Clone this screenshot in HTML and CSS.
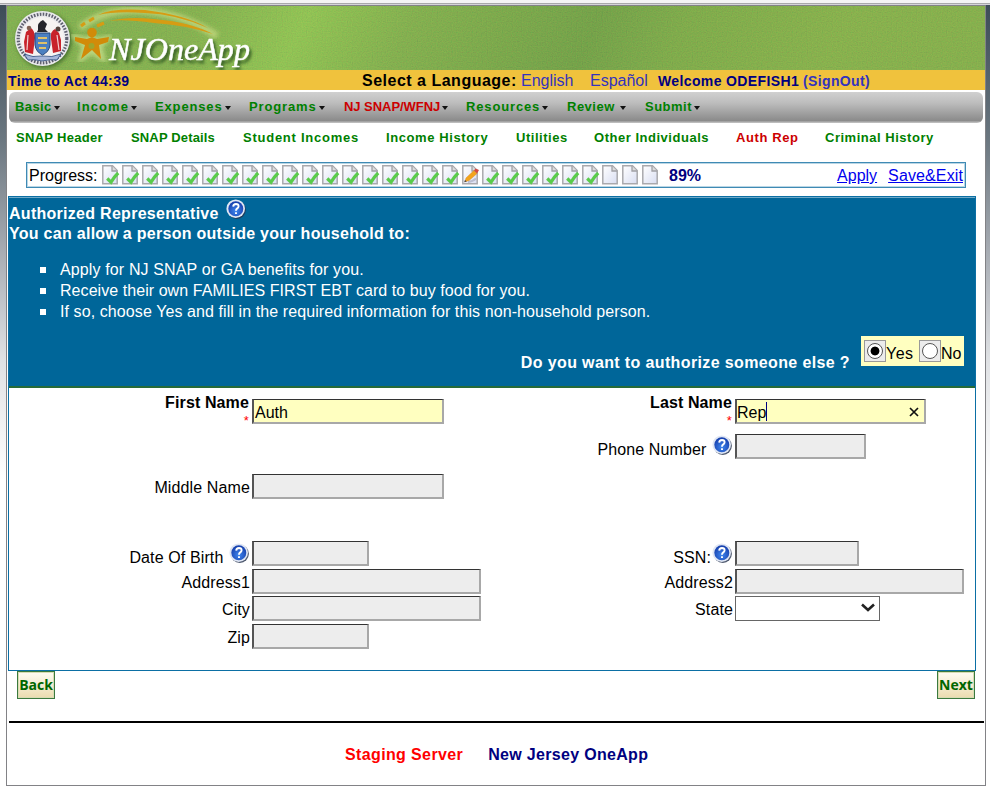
FILE: index.html
```html
<!DOCTYPE html>
<html lang="en">
<head>
<meta charset="utf-8">
<title>NJOneApp - Authorized Representative</title>
<link rel="stylesheet" href="styles.css">
</head>
<body>
<svg class="defs" width="0" height="0" aria-hidden="true">
  <defs>
    <linearGradient id="paper" x1="0" y1="0" x2="1" y2="1"><stop offset="0" stop-color="#fff"/><stop offset="1" stop-color="#d9def2"/></linearGradient>
    <radialGradient id="ball" cx=".5" cy=".65" r=".6"><stop offset="0" stop-color="#3f86ee"/><stop offset="1" stop-color="#1741ae"/></radialGradient>
    <symbol id="page" viewBox="0 0 20 20">
      <path d="M1.8 .8H11.5L16.2 5.5V18.7H1.8Z" fill="url(#paper)" stroke="#a9a9ad" stroke-width="1.5"/>
      <path d="M11 1V6H16" fill="#ddd" stroke="#a0a0a5" stroke-width="1.3"/>
    </symbol>
    <symbol id="done" viewBox="0 0 20 20">
      <use href="#page"/>
      <path d="M6.2 13.5L10 17.2C12 13.5 14 11 17.2 8" fill="none" stroke="#5bcb4b" stroke-width="3.2"/>
    </symbol>
    <symbol id="edit" viewBox="0 0 20 20">
      <use href="#page"/>
      <path d="M7 17Q12 16.5 15 13.5" fill="none" stroke="#b9bdd0" stroke-width="2"/>
      <path d="M5 13L13 5.5L16 8.5L8 15.5L4 16.7Z" fill="#f3a41c" stroke="#d98a24" stroke-width=".5"/>
      <path d="M13 5.5L14.5 3.5L18 5L16 8.5Z" fill="#d34a43"/>
      <path d="M3.2 17.3L4 15L5.8 16.5Z" fill="#444"/>
    </symbol>
    <symbol id="help" viewBox="0 0 20 20">
      <circle cx="10.8" cy="10.8" r="9.1" fill="#25324c" opacity=".8"/>
      <circle cx="9.7" cy="9.7" r="9.3" fill="#dfe6f4"/>
      <circle cx="9.8" cy="9.8" r="7.5" fill="url(#ball)"/>
      <path d="M7.2 7.6Q7.3 5 10 5Q12.6 5.1 12.6 7.2Q12.6 8.6 11 9.6Q10 10.3 10 11.8M10 13.2V15" fill="none" stroke="#fff" stroke-width="1.9"/>
    </symbol>
  </defs>
</svg>
<div class="frame">
  <header class="banner">
    <svg width="978" height="64" viewBox="7 6 978 64">
      <defs>
        <linearGradient id="grass" x1="0" x2="1" y1="0" y2=".03">
          <stop offset="0" stop-color="#74a848"/><stop offset=".2" stop-color="#78a946"/><stop offset=".31" stop-color="#86be4a"/><stop offset=".42" stop-color="#76a744"/><stop offset=".61" stop-color="#64973d"/><stop offset=".7" stop-color="#71a240"/><stop offset=".86" stop-color="#7ba942"/><stop offset="1" stop-color="#79a742"/>
        </linearGradient>
        <filter id="noise" x="0" y="0" width="1" height="1">
          <feTurbulence type="fractalNoise" baseFrequency=".8" numOctaves="1" seed="3"/>
          <feColorMatrix values="1.4 0 0 0 -.1  0 1.4 0 0 0  0 0 0 0 .25  0 0 0 0 .17"/>
        </filter>
        <filter id="soft"><feGaussianBlur stdDeviation="2"/></filter>
      </defs>
      <rect x="7" y="6" width="978" height="64" fill="url(#grass)"/>
      <rect x="7" y="6" width="978" height="64" filter="url(#noise)"/>
      <circle cx="44" cy="40" r="27.5" fill="#426b2a" filter="url(#soft)"/>
      <circle cx="42.5" cy="38.5" r="27.5" fill="#e9e9ec"/>
      <circle cx="42.5" cy="38.5" r="24.3" fill="none" stroke="#5f6070" stroke-width="3.2" stroke-dasharray="1.6 1.4"/>
      <circle cx="42.5" cy="38.5" r="21.5" fill="#f6f3f2"/>
      <path d="M38 30Q37 22 43 20L47 24L45 29L48 32H37Z" fill="#25252b"/>
      <path d="M31 28Q35 31 35 38L33 54L25 52L24 42L26 32Z" fill="#c8232b"/>
      <path d="M55 29Q50 31 51 39L53 53L61 51L61 40L59 33Z" fill="#c8232b"/>
      <path d="M28 35L27 50M57 35L59 50" stroke="#f2d0cf" stroke-width="1.2"/>
      <circle cx="29" cy="28" r="2.3" fill="#806052"/><circle cx="58" cy="29" r="2.5" fill="#54423c"/>
      <path d="M35 33H50V45Q49 52 42.5 55Q36 52 35 45Z" fill="#4b7fc0" stroke="#26477d" stroke-width="1"/>
      <path d="M38 38H47M38 43H47M39 48H46" stroke="#dfc16a" stroke-width="1.8"/>
      <path d="M24 54Q33 58 42 56Q52 58 61 54L57 60Q50 59 42 61Q34 59 28 60Z" fill="#a7b6da" stroke="#26477d" stroke-width=".8"/>
      <path d="M80 28Q105 7 148 11Q185 15 217 36" fill="none" stroke="#d9e58f" stroke-width="7" opacity=".6" filter="url(#soft)"/>
      <path d="M98 15Q112 8 145 10Q186 15 208 28Q176 14 145 13Q115 11 98 15Z" fill="#d69c13"/>
      <path d="M109 21Q128 16 154 19Q190 22 213 34Q185 25 154 23Q125 19 109 21Z" fill="#d69c13"/>
      <path d="M81 26L85 23M89 21L94 18M97 26L104 23" stroke="#d69c13" stroke-width="3"/>
      <path d="M75 37L88 40L91 37L96 40L108 38L100 46L103 59L92 52L81 59L84 46Z" fill="#dcec9d" stroke="#dcec9d" stroke-width="5" opacity=".6" filter="url(#soft)"/>
      <circle cx="92" cy="32.5" r="4.8" fill="#d18b09"/>
      <path d="M75 37L87 39L92 37L97 39L109 37L108 42L99 45L101 59L92 50L81 59L85 45L75 41Z" fill="#d18b09"/>
      <circle cx="91.5" cy="46" r="3" fill="#9fa52b"/>
      <text class="brand" x="109" y="60" textLength="141" lengthAdjust="spacingAndGlyphs">NJOneApp</text>
    </svg>
  </header>
  <div class="status">
    <b class="timer">Time to Act 44:39</b>
    <b class="lang">Select a Language:</b>
    <a class="link">English</a>
    <a class="link">Español</a>
    <b class="user">Welcome ODEFISH1</b>
    <b class="user link">(SignOut)</b>
  </div>
  <nav class="menu">
    <a>Basic</a><a>Income</a><a>Expenses</a><a>Programs</a><a class="active">NJ SNAP/WFNJ</a><a>Resources</a><a>Review</a><a>Submit</a>
  </nav>
  <nav class="submenu">
    <a>SNAP Header</a><a>SNAP Details</a><a>Student Incomes</a><a>Income History</a><a>Utilities</a><a>Other Individuals</a><a class="active">Auth Rep</a><a>Criminal History</a>
  </nav>
  <div class="progress">
    <span class="progress-label">Progress:</span>
    <div class="steps">
      <svg><use href="#done"/></svg><svg><use href="#done"/></svg><svg><use href="#done"/></svg><svg><use href="#done"/></svg><svg><use href="#done"/></svg><svg><use href="#done"/></svg>
      <svg><use href="#done"/></svg><svg><use href="#done"/></svg><svg><use href="#done"/></svg><svg><use href="#done"/></svg><svg><use href="#done"/></svg><svg><use href="#done"/></svg>
      <svg><use href="#done"/></svg><svg><use href="#done"/></svg><svg><use href="#done"/></svg><svg><use href="#done"/></svg><svg><use href="#done"/></svg><svg><use href="#done"/></svg>
      <svg><use href="#edit"/></svg>
      <svg><use href="#done"/></svg><svg><use href="#done"/></svg><svg><use href="#done"/></svg><svg><use href="#done"/></svg><svg><use href="#done"/></svg><svg><use href="#done"/></svg>
      <svg><use href="#page"/></svg><svg><use href="#page"/></svg><svg><use href="#page"/></svg>
    </div>
    <b class="percent">89%</b>
    <a class="action apply">Apply</a>
    <a class="action">Save&amp;Exit</a>
  </div>
  <main class="panel">
    <section class="intro">
      <h1>Authorized Representative<svg class="help"><use href="#help"/></svg></h1>
      <h2>You can allow a person outside your household to:</h2>
      <ul>
        <li>Apply for NJ SNAP or GA benefits for you.</li>
        <li>Receive their own FAMILIES FIRST EBT card to buy food for you.</li>
        <li>If so, choose Yes and fill in the required information for this non-household person.</li>
      </ul>
      <div class="question">
        <b>Do you want to authorize someone else ?</b>
        <div class="choices">
          <span class="radio"><i class="dot on"></i></span><span class="yes">Yes</span>
          <span class="radio"><i class="dot"></i></span><span>No</span>
        </div>
      </div>
    </section>
    <section class="form">
      <label class="c1 r1 required">First Name<em>*</em></label><div class="c2 r1 field medium filled">Auth</div>
      <label class="c3 r1 required">Last Name<em>*</em></label><div class="c4 r1 field medium filled">Rep<i class="cursor"></i><svg class="clear" viewBox="0 0 10 10"><path d="M1 1L9 9M9 1L1 9"/></svg></div>
      <label class="c3 r2 low">Phone Number <svg class="help"><use href="#help"/></svg></label><div class="c4 r2 field phone"></div>
      <label class="c1 r3">Middle Name</label><div class="c2 r3 field medium"></div>
      <label class="c1 r4 low birth">Date Of Birth <svg class="help"><use href="#help"/></svg></label><div class="c2 r4 field short"></div>
      <label class="c3 r4 low birth">SSN:<svg class="help"><use href="#help"/></svg></label><div class="c4 r4 field ssn"></div>
      <label class="c1 r5">Address1</label><div class="c2 r5 field long"></div>
      <label class="c3 r5">Address2</label><div class="c4 r5 field long"></div>
      <label class="c1 r6">City</label><div class="c2 r6 field long"></div>
      <label class="c3 r6">State</label><div class="c4 r6 select"><svg viewBox="0 0 14 9"><path d="M1 1.5L7 7L13 1.5"/></svg></div>
      <label class="c1 r7">Zip</label><div class="c2 r7 field short"></div>
    </section>
  </main>
  <div class="buttons"><button>Back</button><button>Next</button></div>
  <footer><b class="staging">Staging Server</b><b class="site">New Jersey OneApp</b></footer>
</div>
</body>
</html>
```
FILE: styles.css
```css
* { box-sizing: border-box; }
body {
  margin: 0; height: 793px; overflow: hidden; padding: 3px 4px 0 6px;
  font: 16px/20px "Liberation Sans", Arial, sans-serif; color: #000;
  background: linear-gradient(#f4f4f4 0 3px, #a8a8aa 3px 4px, #d4d4d8 4px 5px, transparent 5px),
    linear-gradient(#3d4c58 5px, #6b7780 140px, #a6abb2 250px, #dfe1e4 360px, #fff 480px);
}
a { text-decoration: none; }
.defs { display: block; height: 0; }
.frame { width: 980px; height: 781px; margin-top: 2px; background: #fff; border: 1px solid #828286; }
.banner { height: 64px; }
.banner svg { display: block; }
.brand { font: italic 32px "Liberation Serif", serif; fill: #fff; stroke: #fff; stroke-width: .5; filter: drop-shadow(2px 3px 1.5px #345c24); }

.status { height: 20px; background: #f0c23d; display: grid; grid-template-columns: 354px 159px 69px 68px 145px auto; padding: 1px 0 0 1px; white-space: nowrap; line-height: 20px; }
.status .link { color: #3333bf; }
.timer, .user { font-size: 14px; letter-spacing: .37px; color: #000080; }
.lang { letter-spacing: .5px; }

.menu { height: 31px; margin: 2px 2px 0 2px; border-radius: 6px; background: linear-gradient(#d0d0d0, #bdbdbd 35%, #8b8b8b 92%, #c9c9c9); display: grid; grid-template-columns: 62px 78px 94px 95px 122px 101px 78px auto; padding-left: 6px; }
.menu a, .submenu a { font-size: 13px; font-weight: bold; color: #008000; white-space: nowrap; }
.menu a { display: flex; align-items: center; letter-spacing: .85px; line-height: 30px; height: 30px; }
.menu a::after { content: ""; margin: 2px 0 0 2px; border: 3.5px solid transparent; border-top: 4px solid #111; border-bottom: 0; }
.menu a.active, .submenu a.active { color: #c00; }
.menu a:nth-child(1) { letter-spacing: .4px; }
.menu a:nth-child(2) { letter-spacing: 1.1px; }
.menu a:nth-child(5) { letter-spacing: -.05px; }
.menu a:nth-child(7), .menu a:nth-child(8) { letter-spacing: .5px; }
.menu a:nth-child(7)::after { margin-left: 5px; }
.submenu { height: 39px; display: grid; grid-template-columns: 115px 112px 143px 130px 78px 142px 89px auto; padding: 5px 0 0 9px; }
.submenu a { letter-spacing: .6px; }
.submenu a:nth-child(1) { letter-spacing: .3px; }
.submenu a:nth-child(2) { letter-spacing: .15px; }
.submenu a:nth-child(3) { letter-spacing: .75px; }
.submenu a:nth-child(5), .submenu a:nth-child(6), .submenu a:nth-child(8) { letter-spacing: .52px; }

.progress { width: 940px; height: 26px; margin-left: 19px; padding-left: 2px; border: 1px solid #3f8ab4; box-shadow: inset 0 0 0 1px #b9d6e5; display: flex; align-items: center; white-space: nowrap; }
.progress-label { width: 72px; padding-top: 2px; }
.steps { display: flex; width: 560px; height: 20px; }
.steps svg { width: 20px; height: 20px; flex: none; }
.percent { margin: 2px 0 0 8px; color: #000080; }
.action { color: #00e; text-decoration: underline; white-space: pre; margin-top: 2px; }
.apply { margin-left: auto; margin-right: 11px; }
.action:last-child { margin-right: 2px; letter-spacing: .12px; }

.panel { width: 968px; height: 475px; margin: 8px 0 0 1px; border: 1px solid #0b6fa4; }
.intro { height: 191px; background: #069; color: #fff; border-top: 1px solid #6fa9c8; border-bottom: 2px solid #266b38; }
h1, h2 { margin: 0; font-size: 16px; line-height: 20px; letter-spacing: .28px; }
h1 { display: flex; height: 27px; padding-top: 6px; white-space: pre; }
h1 .help { margin: -5px 0 0 7px; }
h2 { margin-top: -1px; }
.help { width: 20px; height: 20px; flex: none; }
.intro ul { list-style: none; margin: 15px 0 0; padding: 0 0 0 51px; letter-spacing: .09px; line-height: 21px; }
.intro li { display: flex; align-items: center; height: 21px; }
.intro li::before { content: ""; width: 6px; height: 6px; background: #fff; margin: 0 14px 0 -20px; }
.intro li:first-child { letter-spacing: .13px; }
.intro li:nth-child(2) { letter-spacing: .06px; }
.question { display: flex; justify-content: flex-end; margin: 14px 11px 0 0; letter-spacing: .37px; }
.question b { margin: 17px 11px 0 0; }
.choices { width: 103px; height: 30px; background: #ffffc0; color: #000; display: flex; align-items: flex-start; padding: 4px 0 0 3px; letter-spacing: 0; line-height: 27px; }
.radio { width: 22px; height: 22px; border: 1px solid #999; background: #ececec; display: flex; align-items: center; justify-content: center; }
.dot { width: 16px; height: 16px; border: 1px solid #555; border-radius: 50%; background: #fff; }
.dot.on { background: radial-gradient(circle, #000 0 4px, #fff 4.8px); }
.yes { width: 33px; letter-spacing: .5px; }

.form { display: grid; grid-template-columns: 243px 229px 254px 1fr; grid-template-rows: 35px 40px 67px 28px 27px 28px 25px; padding-top: 11px; align-items: start; }
.c1 { grid-column: 1; } .c2 { grid-column: 2; } .c3 { grid-column: 3; } .c4 { grid-column: 4; }
.r1 { grid-row: 1; } .r2 { grid-row: 2; } .r3 { grid-row: 3; } .r4 { grid-row: 4; } .r5 { grid-row: 5; } .r6 { grid-row: 6; } .r7 { grid-row: 7; }
label { padding: 4px 2px 0 0; height: 25px; display: flex; justify-content: flex-end; white-space: pre; letter-spacing: .12px; }
label.low { padding-top: 6px; padding-right: 3px; }
label.birth { padding-top: 7px; }
label .help { margin: -5px 0 0 1px; }
label.required { display: block; text-align: right; font-weight: bold; padding: 0 3px 0 0; margin-top: -6px; letter-spacing: .12px; }
.required em { display: block; font: 13px/16px "Liberation Sans", sans-serif; color: red; }
.field, .select { height: 25px; background: #ededed; border: 2px solid #a8a8a8; border-width: 1.5px 2px 2px 2px; border-top-color: #333; border-left-color: #555; display: flex; align-items: center; }
.medium { width: 192px; } .short { width: 117px; } .long { width: 229px; } .phone { width: 131px; } .ssn { width: 124px; }
.filled { background: #ffffc0; padding: 3px 0 0 1px; }
.c4.filled { width: 191px; padding-left: 0; }
.cursor { width: 1px; height: 19px; background: #000080; margin-top: -3px; }
.clear { width: 10px; height: 10px; margin: 0 5px 1px auto; }
.clear path { fill: none; stroke: #111; stroke-width: 1.7; }
.select { width: 145px; background: #fff; border: 1px solid #666; justify-content: flex-end; }
.select svg { width: 14px; height: 9px; margin: 0 4px 2px 0; }
.select path { fill: none; stroke: #222; stroke-width: 2.6; }

.buttons { display: flex; justify-content: space-between; padding: 0 10px 0 10px; height: 50px; }
button { width: 38px; height: 28px; padding: 0; border: 1px solid #3b7a3e; box-shadow: inset 0 0 0 1px #d8dcb4; background: linear-gradient(#fffdf4, #eadbae); color: #060; font: bold 14px/20px "Open Sans", "Noto Sans", sans-serif; }
footer { margin: 0 1px 0 2px; border-top: 2px solid #000; padding: 22px 0 0 336px; }
.staging { color: red; letter-spacing: .37px; margin-right: 25px; }
.site { color: #000080; letter-spacing: .32px; }
```
